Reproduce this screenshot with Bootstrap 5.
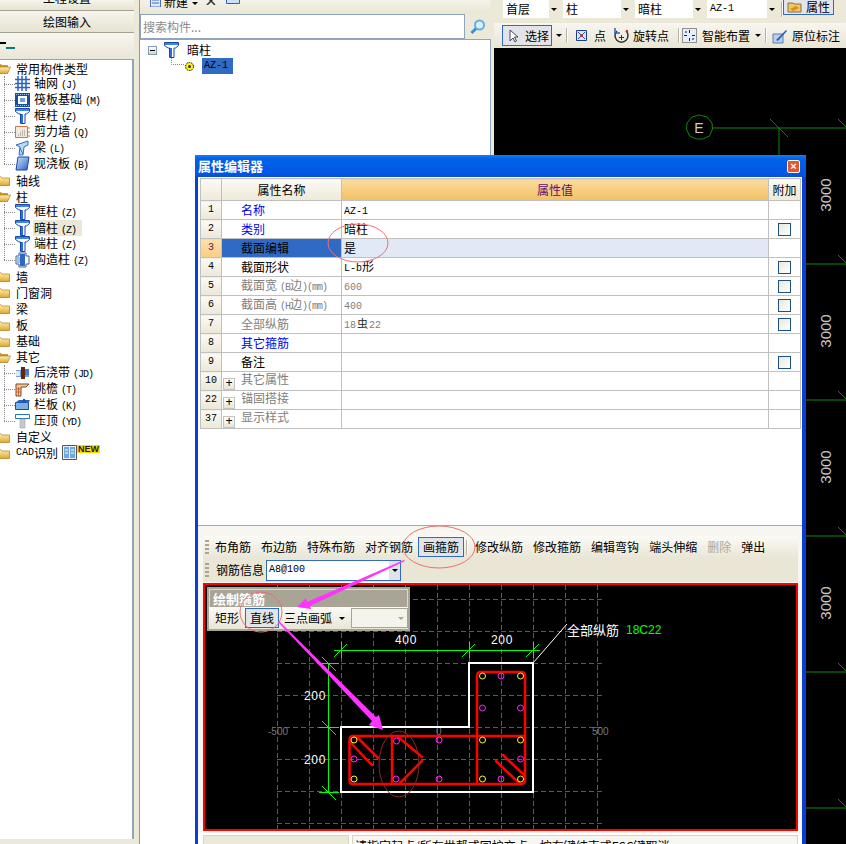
<!DOCTYPE html>
<html lang="zh-CN">
<head>
<meta charset="UTF-8">
<title>属性编辑器</title>
<link href="https://cdn.jsdelivr.net/npm/bootstrap@5.3.0/dist/css/bootstrap.min.css" rel="stylesheet">
<style>
html, body { margin: 0; background: #ece9d8; }
.app { position: relative; width: 846px; height: 844px; overflow: hidden; color: #000; background: #ece9d8;
  font: 12px/16px "Noto Sans CJK SC", "Liberation Sans", sans-serif; }
.lat { font: 10px/14px "Liberation Mono", monospace; }
.lat-gap { margin-left: 3px; }
.lat-tight { letter-spacing: -1px; }
svg { display: block; flex: none; }

/* left column */
.side { width: 134px; flex: none; }
.side-tab { height: 11px; display: flex; justify-content: center; align-items: flex-start; line-height: 16px;
  background: linear-gradient(#f6f4ec, #e6e3d3); border-bottom: 1px solid #a5a294; overflow: hidden; }
.side-tab-cut { margin-top: -10px; }
.side-tab-main { height: 22px; align-items: center; }
.side-tool { height: 26px; padding-top: 9px; background: linear-gradient(#f8f7f1, #e9e6d6); }
.side-tree { height: 780px; background: #fff; border-top: 1px solid #8ea5bd; border-right: 2px solid #8ea5bd; overflow: hidden; }
.tree-row { position: relative; height: 16.04px; line-height: 15px; display: flex; align-items: center; white-space: nowrap; }
.tree-row > .ico-folder { margin-left: -4px; margin-right: 5px; }
.tree-sub { position: relative; }
.tree-sub::before { content: ""; position: absolute; left: 4px; top: 0; bottom: 8px; border-left: 1px dotted #888; }
.tree-kid { padding-left: 15px; }
.tree-kid::before { content: ""; position: absolute; left: 4px; top: 8px; width: 11px; border-top: 1px dotted #888; }
.tree-kid > svg { margin-right: 4px; }
.tree-hl { background: #ebe8d8; padding-right: 6px; margin-left: -1px; padding-left: 1px; height: 16px; }
.new-tag { align-self: flex-start; background: #ffd800; color: #222; font: bold 9px/8px "Liberation Sans", sans-serif; padding: 0 1px; }
.splitter { width: 6px; flex: none; background: #ece9d8; border-right: 1px solid #8b9aa8; }

/* middle column */
.mid { width: 351px; flex: none; }
.mid-tool { height: 14px; padding-left: 10px; background: linear-gradient(#f4f2e8, #e9e6d6); overflow: hidden; align-items: flex-start; }
.mid-new { margin-top: -3px; }
.mid-tool-label { margin: -6px 4px 0 3px; }
.mid-caret { margin: 2px 8px 0 0; }
.mid-del { margin: -3px 10px 0 0; }
.mid-copy { margin-top: -2px; }
.mid-search { height: 25px; }
.mid-input { width: 325px; height: 25px; border: 1px solid #8ea5bd; border-radius: 0; padding: 0 2px; font-size: 12px; background: #fff; color: #888; line-height: 20px; }
.mid-input::placeholder { color: #8a8a8a; }
.mid-find { width: 26px; background: #ece9d8; }
.mid-tree { height: 805px; background: #fff; border-top: 1px solid #8ea5bd; border-right: 1px solid #8ea5bd; padding: 2px 0 0 8px; }
.minus-box { width: 9px; height: 9px; margin-right: 7px; border: 1px solid #7f9db9; background: linear-gradient(#fff, #d8d4c4); position: relative; }
.minus-box::after { content: ""; position: absolute; left: 1px; right: 1px; top: 3px; border-top: 1px solid #000; }
.mid-node { height: 16px; }
.mid-leaf { height: 16px; margin: 0 0 0 36px; }
.mid-sel { background: #316ac5; width: 31px; height: 16px; margin-left: 7px; padding-left: 2px; line-height: 16px; }
.mid-twig { position: absolute; left: 31px; top: 18px; }

/* right column */
.main { flex: 1 1 auto; min-width: 0; }
.grip-space { width: 3px; flex: none; background: #ece9d8; }
.bar-one { height: 23px; padding: 0 0 5px 9px; background: #ece9d8; overflow: hidden; }
.bar-two { height: 25px; padding-left: 8px; background: linear-gradient(#f7f6ef, #e8e5d5); align-items: center; overflow: hidden; }
.combo { height: 18px; background: #fff; display: flex; margin-right: 5px; padding-left: 3px; align-items: center; }
.combo span { flex: 1; }
.combo i, .combo-arrow { width: 9px; align-self: stretch; background: #ece9d8; display: flex; align-items: center; justify-content: center; }
.combo i::after, .caret-mini { content: ""; display: block; border: 3px solid transparent; border-top: 3px solid #000; border-bottom: 0; flex: none; }
.cb-a { width: 55px; } .cb-b { width: 67px; } .cb-c { width: 67px; } .cb-d { width: 69px; }
.tbar-sep { width: 1px; align-self: center; height: 15px; background: #b6b3a4; border-right: 1px solid #fff; box-sizing: content-box; flex: none; }
.tb-btn { display: inline-flex; align-items: center; padding: 0 4px; height: 20px; border: 1px solid transparent; border-radius: 0; font-size: 12px; line-height: 16px; color: #000; white-space: nowrap; flex: none; }
.tb-on, .tb-on:hover { border-color: #316ac5; background: #e1e5ea; }
.tb-off { color: #aca899; }
.btn-prop { height: 16px; width: 51px; margin: -1px 0 0 0; padding: 0 3px; gap: 4px; }
.btn-pick { width: 50px; height: 21px; gap: 7px; padding: 0 6px; }
.ms-a { margin-left: 3px; } .ms-b { margin-left: 4px; }
.pull-a { margin-left: -3px; }
.gap-tiny { gap: 3px; }
.gap-fourpx { gap: 4px; }
.gap-pt { gap: 7px; }
.text-nudge { margin-left: 2px; }
.cad-black { background: #000; }

/* dialog */
.dlg { position: absolute; left: 195px; top: 155px; width: 611px; height: 700px; background: #0a3ed4; padding: 0 4px 0 3px; z-index: 5; }
.dlg-title { height: 22px; margin: 0 -4px 0 -3px; padding: 0 6px 0 3px; color: #fff; font-weight: bold; font-size: 13px;
  background: linear-gradient(#1a7df0 0, #0260ea 18%, #0158e6 80%, #0a4fd0 100%); }
.dlg-close { width: 13px; height: 13px; border: 1px solid #fff; border-radius: 2px; background: #e2572e; color: #fff; font: bold 11px/11px "Liberation Sans", sans-serif; text-align: center; }
.dlg-body { background: #fff; height: 678px; }
.grid-wrap { height: 349px; padding: 1px 0 0 2px; border-bottom: 1px solid #aca899; }
.prop-grid.table { width: 600px; table-layout: fixed; border-collapse: collapse; margin: 0; --bs-table-border-color: #c0c0c0; --bs-table-bg: #fff; }
.prop-grid.table > :not(caption) > * > * { padding: 0; height: 19px; line-height: 14px; font-size: 12px; font-weight: normal; border-width: 1px; border-color: #c0c0c0; vertical-align: middle; color: #000; white-space: nowrap; }
.prop-grid.table > thead > tr > th { height: 22px; text-align: center; background-image: linear-gradient(#fbfaf5, #eee9d8); }
.prop-grid.table > thead > tr > th.head-val { background-image: linear-gradient(#fbdca0, #f2c063); color: #5f0f6f; }
.prop-grid.table > tbody > tr > td.cell-idx { text-align: center; font-family: "Liberation Mono", monospace; font-size: 10px; background-image: linear-gradient(#fbfaf5, #ebe8d8); }
.prop-grid.table > tbody > tr > td.cell-idx-on { background-image: linear-gradient(#fde0aa, #f9cd85); color: #5f0f6f; }
.prop-grid.table > tbody > tr > td.cell-name { padding-left: 19px; }
.prop-grid.table > tbody > tr > td.cell-val { padding-left: 2px; }
.prop-grid.table > tbody > tr > td.cell-name-on { background-color: #316ac5; --bs-table-bg: #316ac5; }
.prop-grid.table > tbody > tr > td.cell-val-on { background-color: #e0e9f5; --bs-table-bg: #e0e9f5; }
.prop-grid.table > tbody > tr > td.cell-blue { color: #0000f0; }
.prop-grid.table > tbody > tr > td.cell-gray { color: #808080; }
.prop-grid.table > tbody > tr > td.cell-group { padding-left: 1px; color: #808080; }
.prop-grid.table > tbody > tr > td.cell-check { text-align: center; }
.prop-grid .lat { line-height: 12px; }
.col-idx { width: 21px; } .col-name { width: 120px; } .col-val { width: 427px; } .col-extra { width: 32px; }
.extra-box.form-check-input { width: 13px; height: 13px; margin: 0 auto; display: block; border: 1px solid #1c5180; border-radius: 0; background-image: linear-gradient(135deg, #e8e8e0, #fff); --bs-form-check-bg: #fff; }
.plus-box { display: inline-block; width: 12px; height: 12px; margin-right: 6px; border: 1px solid #c4c4bc; background: linear-gradient(#fff, #e6e4da); color: #000; font: 12px/10px "Liberation Mono", monospace; text-align: center; vertical-align: -3px; }
.rebar-mark { color: #222; margin: 0 1px; font-size: 11px; line-height: 12px; }
.tools { height: 307px; background: #f7f6f0; padding: 10px 4px 0 5px; }
.tools-a { height: 22px; background: linear-gradient(#fbfaf5, #e9e6d6); padding-left: 2px; }
.tools-b { height: 24px; background: #e9e6d6; padding-left: 2px; }
.grip { width: 4px; height: 15px; flex: none; background: repeating-linear-gradient(#a8a594 0 2px, transparent 2px 4px); margin-right: 1px; }
.sep-gap { margin: 0 2px 0 2px; }
.rebar-label { margin: 0 2px 0 6px; }
.rebar-combo { width: 135px; height: 21px; border: 1px solid #316ac5; background: #fff; padding-left: 2px; }
.rebar-combo span { flex: 1; }
.rebar-combo i { width: 11px; align-self: stretch; background: #dfe3ea; display: flex; align-items: center; justify-content: center; }
.rebar-combo i::after { content: ""; border: 3px solid transparent; border-top-color: #000; border-bottom: 0; }
.cad-frame { position: relative; height: 248px; width: 595px; border: 2px solid #f00; background: #000; margin-top: 1px; }
.float-bar { position: absolute; left: 2px; top: 2px; width: 203px; height: 44px; background: #a8a596; padding: 2px; z-index: 2; }
.float-title { height: 18px; color: #fff; font-weight: bold; font-size: 13px; padding-left: 3px; border: 1px solid #dcdad0; border-bottom: 0; }
.float-row { height: 22px; background: linear-gradient(#fbfaf5, #e9e6d6); padding-left: 6px; white-space: nowrap; }
.float-row > span { flex: none; }
.float-on { height: 20px; width: 34px; padding: 0 4px; margin: 0 5px 0 2px; }
.float-caret { margin: 0 6px 0 7px; }
.float-combo { width: 57px; height: 20px; border: 1px solid #a8a596; background: #f4f3ec; display: flex; align-items: center; justify-content: flex-end; padding-right: 3px; }
.float-combo::after { content: ""; border: 3px solid transparent; border-top-color: #a8a596; border-bottom: 0; }
.state-row { height: 12px; margin-top: 4px; gap: 3px; }
.state-left { width: 146px; background: #ece9d8; border: 1px solid #d8d5c6; border-bottom: 0; }
.state-right { flex: 1; background: #f7f6f0; border: 1px solid #d8d5c6; border-bottom: 0; padding: 2px 0 0 2px; white-space: nowrap; overflow: hidden; }
.overlay { position: absolute; left: 0; top: 0; z-index: 10; pointer-events: none; }
.cad-num { font: 12px "Liberation Sans", sans-serif; letter-spacing: .6px; }
.cad-cjk { font: 13px "Noto Sans CJK SC", sans-serif; }
</style>
</head>
<body>
<svg width="0" height="0" class="position-absolute">
  <defs>
    <linearGradient id="g-blue" x1="0" y1="0" x2="1" y2="1"><stop offset="0" stop-color="#cfe3fb"/><stop offset="1" stop-color="#2a62c4"/></linearGradient>
    <linearGradient id="g-fold" x1="0" y1="0" x2="0" y2="1"><stop offset="0" stop-color="#fff2b8"/><stop offset="1" stop-color="#e2a62c"/></linearGradient>
  </defs>
  <symbol id="i-col" viewBox="0 0 15 16"><path d="M.5.5h14v3l-3 2.5h-1.500v9.500h-4.500V6H4L.5 3.500z" fill="#fff" stroke="#1546b4"/><path d="M1 1h13v2H1z" fill="#3f86de"/><path d="M6 6h2v9H6z" fill="#2f6fd0"/></symbol>
  <symbol id="i-open" viewBox="0 0 15 14"><path d="M1 12V3h4l1 1h6v2H4z" fill="#c99a3a"/><path d="M.5 12.500 3.500 6h11l-3 6.500z" fill="url(#g-fold)" stroke="#a87a20" stroke-width=".7"/></symbol>
  <symbol id="i-shut" viewBox="0 0 15 14"><path d="M.5 12.500v-9h4l1.500 1.500h7.500v7.500z" fill="url(#g-fold)" stroke="#a87a20" stroke-width=".7"/></symbol>
  <symbol id="i-grid" viewBox="0 0 15 16"><path d="M0 3.500h15M0 7.500h15M0 11.500h15M3 0v15M7 0v15M11 0v15" stroke="#2a62c4" stroke-width="1.500" fill="none"/></symbol>
  <symbol id="i-raft" viewBox="0 0 15 16"><path d="M0 1h15v14H0z" fill="#184f9a"/><path d="M3 4h9v8H3z" fill="#fff"/><path d="M5 6h5v4H5z" fill="#6fa0d8"/><path d="M1 2.500h13M1 13.500h13" stroke="#9cc0ea" stroke-dasharray="1 1"/></symbol>
  <symbol id="i-wall" viewBox="0 0 15 16"><path d="M.5 2.500h12v11H.5z" fill="#f3e8dc" stroke="#c8784a"/><path d="M3 11h8M5 9h6M7 7h4" stroke="#888" stroke-dasharray="1 1"/><path d="M13 4h2M13 8h2M13 12h2" stroke="#e07020"/></symbol>
  <symbol id="i-beam" viewBox="0 0 15 16"><path d="M1 5 13 1v4l-4 2-1 8H4l1-8z" fill="#bcd8f4" stroke="#2a72c4"/><path d="M5 8l3 6" stroke="#2a72c4"/></symbol>
  <symbol id="i-slab" viewBox="0 0 15 16"><path d="M3 1h11l-2 13H1z" fill="url(#g-blue)" stroke="#1546b4"/></symbol>
  <symbol id="i-cons" viewBox="0 0 15 16"><path d="M4 1h7v3h3v8h-3v3H4v-3H1V4h3z" fill="#fff" stroke="#3a5f9a"/><path d="M5 2h5v12H5z" fill="#2d68c8"/><path d="M2 5h3v6H2z" fill="#9cc0ea"/></symbol>
  <symbol id="i-post" viewBox="0 0 15 16"><path d="M1 5h13v7H1z" fill="#7a9ad0"/><path d="M6 2h4v12H6z" fill="#5a2a10"/><path d="M10 4h4v6h-4z" fill="#4a78d0"/><path d="M1 6h4v5H1z" fill="#dce6f4"/></symbol>
  <symbol id="i-eave" viewBox="0 0 15 16"><path d="M1 3h13l-3 3H6v9H1z" fill="#f6c8a0" stroke="#7a4a2a"/><path d="M1 8h5M1 11h5M3.500 6v9" stroke="#d06030"/></symbol>
  <symbol id="i-rail" viewBox="0 0 15 16"><path d="M.5 5.500h13v7H.5z" fill="#7fb0e4" stroke="#1a4f9a"/><path d="M.5 5.500 4 3h11l-1.500 2.500z" fill="#2a62c4"/><path d="M9 2v3" stroke="#1a4f9a" stroke-width="2"/></symbol>
  <symbol id="i-top" viewBox="0 0 15 16"><path d="M.5 1.500h14v4H.5z" fill="#fff" stroke="#2a72c4"/><path d="M5 6h5v9H5z" fill="#c8c8c8" stroke="#999" stroke-width=".5"/></symbol>
</svg>

<div class="app d-flex">
  <div class="side">
    <div class="side-tab"><span class="side-tab-cut">工程设置</span></div>
    <div class="side-tab side-tab-main">绘图输入</div>
    <div class="side-tool">
      <svg width="16" height="9"><path d="M0 1h6" stroke="#000" stroke-width="2"/><path d="M6 6h9" stroke="#0a7a80" stroke-width="2"/></svg>
    </div>
    <div class="side-tree">
      <ul class="list-unstyled m-0">
        <li class="tree-row"><svg class="ico-folder" width="15" height="14"><use href="#i-open"/></svg>常用构件类型</li>
      </ul>
      <ul class="list-unstyled m-0 tree-sub">
        <li class="tree-row tree-kid"><svg width="15" height="16"><use href="#i-grid"/></svg><span>轴网<span class="lat lat-gap lat-tight">(J)</span></span></li>
        <li class="tree-row tree-kid"><svg width="15" height="16"><use href="#i-raft"/></svg><span>筏板基础<span class="lat lat-gap lat-tight">(M)</span></span></li>
        <li class="tree-row tree-kid"><svg width="15" height="16"><use href="#i-col"/></svg><span>框柱<span class="lat lat-gap lat-tight">(Z)</span></span></li>
        <li class="tree-row tree-kid"><svg width="15" height="16"><use href="#i-wall"/></svg><span>剪力墙<span class="lat lat-gap lat-tight">(Q)</span></span></li>
        <li class="tree-row tree-kid"><svg width="15" height="16"><use href="#i-beam"/></svg><span>梁<span class="lat lat-gap lat-tight">(L)</span></span></li>
        <li class="tree-row tree-kid"><svg width="15" height="16"><use href="#i-slab"/></svg><span>现浇板<span class="lat lat-gap lat-tight">(B)</span></span></li>
      </ul>
      <ul class="list-unstyled m-0">
        <li class="tree-row"><svg class="ico-folder" width="15" height="14"><use href="#i-shut"/></svg>轴线</li>
        <li class="tree-row"><svg class="ico-folder" width="15" height="14"><use href="#i-open"/></svg>柱</li>
      </ul>
      <ul class="list-unstyled m-0 tree-sub">
        <li class="tree-row tree-kid"><svg width="15" height="16"><use href="#i-col"/></svg><span>框柱<span class="lat lat-gap lat-tight">(Z)</span></span></li>
        <li class="tree-row tree-kid"><svg width="15" height="16"><use href="#i-col"/></svg><span class="tree-hl">暗柱<span class="lat lat-gap lat-tight">(Z)</span></span></li>
        <li class="tree-row tree-kid"><svg width="15" height="16"><use href="#i-col"/></svg><span>端柱<span class="lat lat-gap lat-tight">(Z)</span></span></li>
        <li class="tree-row tree-kid"><svg width="15" height="16"><use href="#i-cons"/></svg><span>构造柱<span class="lat lat-gap lat-tight">(Z)</span></span></li>
      </ul>
      <ul class="list-unstyled m-0">
        <li class="tree-row"><svg class="ico-folder" width="15" height="14"><use href="#i-shut"/></svg>墙</li>
        <li class="tree-row"><svg class="ico-folder" width="15" height="14"><use href="#i-shut"/></svg>门窗洞</li>
        <li class="tree-row"><svg class="ico-folder" width="15" height="14"><use href="#i-shut"/></svg>梁</li>
        <li class="tree-row"><svg class="ico-folder" width="15" height="14"><use href="#i-shut"/></svg>板</li>
        <li class="tree-row"><svg class="ico-folder" width="15" height="14"><use href="#i-shut"/></svg>基础</li>
        <li class="tree-row"><svg class="ico-folder" width="15" height="14"><use href="#i-open"/></svg>其它</li>
      </ul>
      <ul class="list-unstyled m-0 tree-sub">
        <li class="tree-row tree-kid"><svg width="15" height="16"><use href="#i-post"/></svg><span>后浇带<span class="lat lat-gap lat-tight">(JD)</span></span></li>
        <li class="tree-row tree-kid"><svg width="15" height="16"><use href="#i-eave"/></svg><span>挑檐<span class="lat lat-gap lat-tight">(T)</span></span></li>
        <li class="tree-row tree-kid"><svg width="15" height="16"><use href="#i-rail"/></svg><span>栏板<span class="lat lat-gap lat-tight">(K)</span></span></li>
        <li class="tree-row tree-kid"><svg width="15" height="16"><use href="#i-top"/></svg><span>压顶<span class="lat lat-gap lat-tight">(YD)</span></span></li>
      </ul>
      <ul class="list-unstyled m-0">
        <li class="tree-row"><svg class="ico-folder" width="15" height="14"><use href="#i-shut"/></svg>自定义</li>
        <li class="tree-row"><svg class="ico-folder" width="15" height="14"><use href="#i-shut"/></svg><span class="lat">CAD</span>识别
          <svg class="ms-1" width="15" height="15"><path d="M.5.5h14v14H.5z" fill="#e8f0fa" stroke="#555"/><path d="M2 2h5v11H2zM8 2h5v11H8z" fill="#6fa8e0"/><path d="M3 5h3M3 8h3M9 5h3M9 8h3" stroke="#fff"/></svg>
          <span class="new-tag">NEW</span></li>
      </ul>
    </div>
  </div>
  <div class="splitter"></div>

  <div class="mid">
    <div class="mid-tool d-flex">
      <svg class="mid-new" width="11" height="10"><path d="M.5 0h10v10H.5z" fill="#dfe8f6" stroke="#4a6fb0"/><path d="M2 3h7M2 6h7" stroke="#4a6fb0"/></svg>
      <span class="mid-tool-label">新建</span>
      <span class="caret-mini mid-caret"></span>
      <svg class="mid-del" width="10" height="8"><path d="M1 0l8 8M9 0 1 8" stroke="#333" stroke-width="1.500"/></svg>
      <svg class="mid-copy" width="14" height="6"><path d="M.5 0v5.500h13V0" fill="#cfe0f6" stroke="#2a62c4"/></svg>
    </div>
    <div class="mid-search d-flex">
      <input class="mid-input" type="text" placeholder="搜索构件...">
      <div class="mid-find d-flex align-items-center justify-content-center">
        <svg width="16" height="16"><circle cx="9.500" cy="6" r="4.500" fill="#dff0ff" stroke="#5ab0ee" stroke-width="2"/><path d="M6 9.500 1.500 14" stroke="#3a90d8" stroke-width="3"/></svg>
      </div>
    </div>
    <div class="mid-tree position-relative">
      <div class="d-flex align-items-center mid-node">
        <span class="minus-box"></span>
        <svg class="me-2" width="15" height="16"><use href="#i-col"/></svg>
        <span>暗柱</span>
      </div>
      <svg class="mid-twig" width="13" height="8" viewBox="0 0 13 8"><path d="M.5 0v6.500H13" stroke="#888" stroke-dasharray="1 1" fill="none"/></svg>
      <div class="d-flex align-items-center mid-leaf">
        <svg width="11" height="11"><circle cx="5.500" cy="5.500" r="4" fill="#ffee20" stroke="#000" stroke-dasharray="1.500 1"/><circle cx="5.500" cy="5.500" r="1.500" fill="#333"/></svg>
        <span class="mid-sel lat">AZ-1</span>
      </div>
    </div>
  </div>

  <div class="grip-space"></div>
  <div class="main">
    <div class="bar-one d-flex align-items-start">
      <div class="combo cb-a"><span>首层</span><i></i></div>
      <div class="combo cb-b"><span>柱</span><i></i></div>
      <div class="combo cb-c"><span>暗柱</span><i></i></div>
      <div class="combo cb-d"><span class="lat">AZ-1</span><i></i></div>
      <span class="tbar-sep"></span>
      <button class="btn tb-btn tb-on btn-prop" type="button">
        <svg width="15" height="14"><path d="M1 3h5l1 1h7v8H1z" fill="#f0c860" stroke="#8a7040"/><path d="M3 9l6-3 3 2-6 3z" fill="#e08a20"/></svg>属性
      </button>
    </div>
    <div class="bar-two d-flex">
      <button class="btn tb-btn tb-on btn-pick" type="button">
        <svg width="9" height="14"><path d="M1 1v11l3-3 2 4 1.500-1-2-4h3.500z" fill="#fff" stroke="#445"/></svg>选择
      </button>
      <span class="caret-mini ms-1"></span>
      <span class="tbar-sep ms-1"></span>
      <span class="tb-btn gap-pt ms-a">
        <svg width="11" height="11"><path d="M.5.500h10v10H.5z" fill="#dce4f4" stroke="#1a3f90"/><path d="M2 2l7 7M9 2 2 9" stroke="#2a52b0"/><circle cx="5.500" cy="5.500" r="1.500" fill="#e02020"/></svg>点
      </span>
      <span class="tb-btn gap-tiny pull-a">
        <svg width="17" height="17"><path d="M4 4a6.500 6.500 0 1 0 9 0" fill="none" stroke="#333" stroke-width="1.500"/><path d="M2 1v5h5" fill="none" stroke="#2a62c4" stroke-width="1.500"/><path d="M8.500 8v5M6 10.500h5" stroke="#333"/><circle cx="14" cy="4" r="1.200" fill="#c03030"/></svg>旋转点
      </span>
      <span class="tbar-sep ms-1"></span>
      <span class="tb-btn gap-tiny px-1 pull-a">
        <svg width="15" height="15"><path d="M.5.500h14v14H.5z" fill="#e8eef8" stroke="#333" stroke-dasharray="1 1"/><path d="M7.500 2v3M7.500 10v3M2 7.500h3M10 7.500h3" stroke="#223"/><circle cx="4" cy="4" r="1" fill="#2a62c4"/><circle cx="11" cy="11" r="1" fill="#2a62c4"/></svg>
        <span class="text-nudge">智能布置</span>
      </span>
      <span class="caret-mini"></span>
      <span class="tbar-sep ms-b"></span>
      <span class="tb-btn gap-fourpx px-1">
        <svg width="16" height="16"><path d="M1 6h10v9H1z" fill="#bcd0ea" stroke="#5a7ab0"/><path d="M4 12 14 2l1 1L6 13z" fill="#2a62c4"/></svg>原位标注
      </span>
    </div>
    <svg class="cad-black" width="352" height="796" viewBox="494 48 352 796">
      <g stroke="#0a8a0a" fill="none">
        <path d="M699 115l8 2 5 6 .500 6-3 7-7 3h-6l-7-3-3-7 .500-6 5-6z"/>
        <path d="M712 128H846M779 128v30M770 119l18 18M838 119l8 8"/>
        <path d="M806 264H846M838 255l8 8M806 400H846M838 391l8 8M806 536H846M838 527l8 8M806 672H846M838 663l8 8M806 808H846M838 799l8 8"/>
      </g>
      <text x="699" y="133" fill="#ccc" text-anchor="middle" font-family="Liberation Sans, sans-serif" font-size="14">E</text>
      <g fill="#c8c8c8" font-family="Liberation Sans, sans-serif" font-size="15" text-anchor="middle">
        <text transform="translate(831 195) rotate(-90)">3000</text>
        <text transform="translate(831 331) rotate(-90)">3000</text>
        <text transform="translate(831 467) rotate(-90)">3000</text>
        <text transform="translate(831 603) rotate(-90)">3000</text>
      </g>
    </svg>
  </div>

  <section class="dlg">
    <div class="dlg-title d-flex align-items-center justify-content-between">
      <span>属性编辑器</span>
      <span class="dlg-close">×</span>
    </div>
    <div class="dlg-body">
      <div class="grid-wrap">
        <table class="table table-bordered prop-grid">
          <colgroup><col class="col-idx"><col class="col-name"><col class="col-val"><col class="col-extra"></colgroup>
          <thead>
            <tr><th></th><th>属性名称</th><th class="head-val">属性值</th><th>附加</th></tr>
          </thead>
          <tbody>
            <tr><td class="cell-idx">1</td><td class="cell-name cell-blue">名称</td><td class="cell-val"><span class="lat">AZ-1</span></td><td></td></tr>
            <tr><td class="cell-idx">2</td><td class="cell-name cell-blue">类别</td><td class="cell-val">暗柱</td><td class="cell-check"><input class="form-check-input extra-box" type="checkbox"></td></tr>
            <tr><td class="cell-idx cell-idx-on">3</td><td class="cell-name cell-name-on">截面编辑</td><td class="cell-val cell-val-on">是</td><td></td></tr>
            <tr><td class="cell-idx">4</td><td class="cell-name">截面形状</td><td class="cell-val"><span class="lat">L-b</span>形</td><td class="cell-check"><input class="form-check-input extra-box" type="checkbox"></td></tr>
            <tr><td class="cell-idx">5</td><td class="cell-name cell-gray">截面宽<span class="lat lat-gap lat-tight">(B</span>边<span class="lat lat-tight">)(mm)</span></td><td class="cell-val cell-gray"><span class="lat">600</span></td><td class="cell-check"><input class="form-check-input extra-box" type="checkbox"></td></tr>
            <tr><td class="cell-idx">6</td><td class="cell-name cell-gray">截面高<span class="lat lat-gap lat-tight">(H</span>边<span class="lat lat-tight">)(mm)</span></td><td class="cell-val cell-gray"><span class="lat">400</span></td><td class="cell-check"><input class="form-check-input extra-box" type="checkbox"></td></tr>
            <tr><td class="cell-idx">7</td><td class="cell-name cell-gray">全部纵筋</td><td class="cell-val cell-gray"><span class="lat">18</span><span class="rebar-mark">虫</span><span class="lat">22</span></td><td class="cell-check"><input class="form-check-input extra-box" type="checkbox"></td></tr>
            <tr><td class="cell-idx">8</td><td class="cell-name cell-blue">其它箍筋</td><td></td><td></td></tr>
            <tr><td class="cell-idx">9</td><td class="cell-name">备注</td><td></td><td class="cell-check"><input class="form-check-input extra-box" type="checkbox"></td></tr>
            <tr><td class="cell-idx">10</td><td class="cell-group"><span class="plus-box">+</span>其它属性</td><td></td><td></td></tr>
            <tr><td class="cell-idx">22</td><td class="cell-group"><span class="plus-box">+</span>锚固搭接</td><td></td><td></td></tr>
            <tr><td class="cell-idx">37</td><td class="cell-group"><span class="plus-box">+</span>显示样式</td><td></td><td></td></tr>
          </tbody>
        </table>
      </div>

      <div class="tools">
        <div class="tools-a d-flex align-items-center">
          <span class="grip"></span>
          <button class="btn tb-btn" type="button">布角筋</button>
          <button class="btn tb-btn" type="button">布边筋</button>
          <button class="btn tb-btn" type="button">特殊布筋</button>
          <button class="btn tb-btn" type="button">对齐钢筋</button>
          <button class="btn tb-btn tb-on" type="button">画箍筋</button>
          <span class="tbar-sep sep-gap"></span>
          <button class="btn tb-btn" type="button">修改纵筋</button>
          <button class="btn tb-btn" type="button">修改箍筋</button>
          <button class="btn tb-btn" type="button">编辑弯钩</button>
          <button class="btn tb-btn" type="button">端头伸缩</button>
          <button class="btn tb-btn tb-off" type="button">删除</button>
          <button class="btn tb-btn" type="button">弹出</button>
        </div>
        <div class="tools-b d-flex align-items-center">
          <span class="grip"></span>
          <span class="rebar-label">钢筋信息</span>
          <div class="rebar-combo d-flex align-items-center"><span class="lat">A8@100</span><i></i></div>
        </div>
        <div class="cad-frame">
          <svg width="591" height="244" viewBox="205 586 591 244">
            <g stroke="#5a5a5a" stroke-dasharray="5 3" fill="none" shape-rendering="crispEdges">
              <path d="M277 600H603M277 632H603M277 664H603M277 696H603M277 728H603M277 760H603M277 792H603M277 824H603"/>
              <path d="M277 586V830M309 586V830M341 586V830M373 586V830M405 586V830M437 586V830M469 586V830M501 586V830M533 586V830M565 586V830M597 586V830"/>
            </g>
            <g fill="#777" font-family="Liberation Sans, sans-serif" font-size="10">
              <text x="268" y="736">-500</text>
              <text x="436" y="736">0</text>
              <text x="592" y="736">500</text>
            </g>
            <g stroke="#0f0" fill="none" shape-rendering="crispEdges">
              <path d="M334 651.500H540M341 643V659M469 643V659M533 643V659M334 658l13-13M462 658l13-13M526 658l13-13"/>
              <path d="M328.500 664V793M319 664H339M319 728H339M319 793H339M322 658l14 14M322 722l14 14M322 787l14 14"/>
            </g>
            <g fill="#fff" class="cad-num" text-anchor="middle">
              <text x="406" y="645">400</text>
              <text x="502" y="645">200</text>
              <text x="315" y="701">200</text>
              <text x="315" y="765">200</text>
            </g>
            <path d="M341 728H469V664H533V793H341z" fill="none" stroke="#fff" stroke-width="2"/>
            <path d="M533 664 567 625" stroke="#fff" fill="none"/>
            <text x="567" y="636" fill="#fff" class="cad-cjk">全部纵筋</text>
            <text x="626" y="635" fill="#0f0" font-family="Liberation Sans, sans-serif" font-size="12">18C22</text>
            <g fill="none" stroke="#f00" stroke-width="2.500" stroke-linejoin="round" stroke-linecap="round">
              <path d="M353 737H525M353 785H521Q525 785 525 781V677Q525 673 521 673H481Q477 673 477 677V785M353 737Q349.500 737 349.500 741V781Q349.500 785 353 785"/>
              <path d="M358 739l20 20M350 743l22 23M392 737V785M397 737l25 21M422 762l-22 22M503 756l22 21M496 762l24 23"/>
            </g>
            <g fill="none" stroke-width="1">
              <g stroke="#ff0">
                <circle cx="482.500" cy="677" r="3"/><circle cx="520.500" cy="677" r="3"/><circle cx="354" cy="741" r="3"/><circle cx="482.500" cy="741" r="3"/><circle cx="520.500" cy="741" r="3"/><circle cx="354" cy="780" r="3"/><circle cx="482.500" cy="780" r="3"/><circle cx="520.500" cy="780" r="3"/>
              </g>
              <g stroke="#f2f">
                <circle cx="501" cy="677" r="3"/><circle cx="482.500" cy="709" r="3"/><circle cx="520.500" cy="709" r="3"/><circle cx="396.500" cy="742" r="3"/><circle cx="439" cy="741" r="3"/><circle cx="520.500" cy="760" r="3"/><circle cx="354" cy="760" r="3"/><circle cx="396" cy="780" r="3"/><circle cx="439" cy="780" r="3"/><circle cx="501" cy="780" r="3"/>
              </g>
            </g>
          </svg>
          <div class="float-bar">
            <div class="float-title d-flex align-items-center">绘制箍筋</div>
            <div class="float-row d-flex align-items-center">
              <span class="me-1">矩形</span>
              <button class="btn tb-btn tb-on float-on" type="button">直线</button>
              <span>三点画弧</span>
              <span class="caret-mini float-caret"></span>
              <span class="float-combo"></span>
            </div>
          </div>
        </div>
        <div class="state-row d-flex">
          <div class="state-left"></div>
          <div class="state-right">请指定起点/所有世帮或回护交点，按右键结束或ESC键取消</div>
        </div>
      </div>
    </div>
  </section>

  <svg class="overlay" width="846" height="844" viewBox="0 0 846 844">
    <g fill="none" stroke="#ee6f73">
      <ellipse cx="358" cy="243" rx="30" ry="19"/>
      <ellipse cx="439" cy="547" rx="36" ry="21"/>
      <ellipse cx="261" cy="612" rx="21" ry="20"/>
    </g>
    <ellipse cx="399" cy="764" rx="20" ry="33" fill="none" stroke="#8b2a22"/>
    <path d="M405 561 310 606 311 609 297 607 306 598 307 602 404 560z" fill="#f3f"/>
    <path d="M278 622 279 621 376 717 379 715 383 730 369 725 372 721z" fill="#f3f"/>
  </svg>
</div>
<script src="https://cdn.jsdelivr.net/npm/bootstrap@5.3.0/dist/js/bootstrap.bundle.min.js"></script>
</body>
</html>
